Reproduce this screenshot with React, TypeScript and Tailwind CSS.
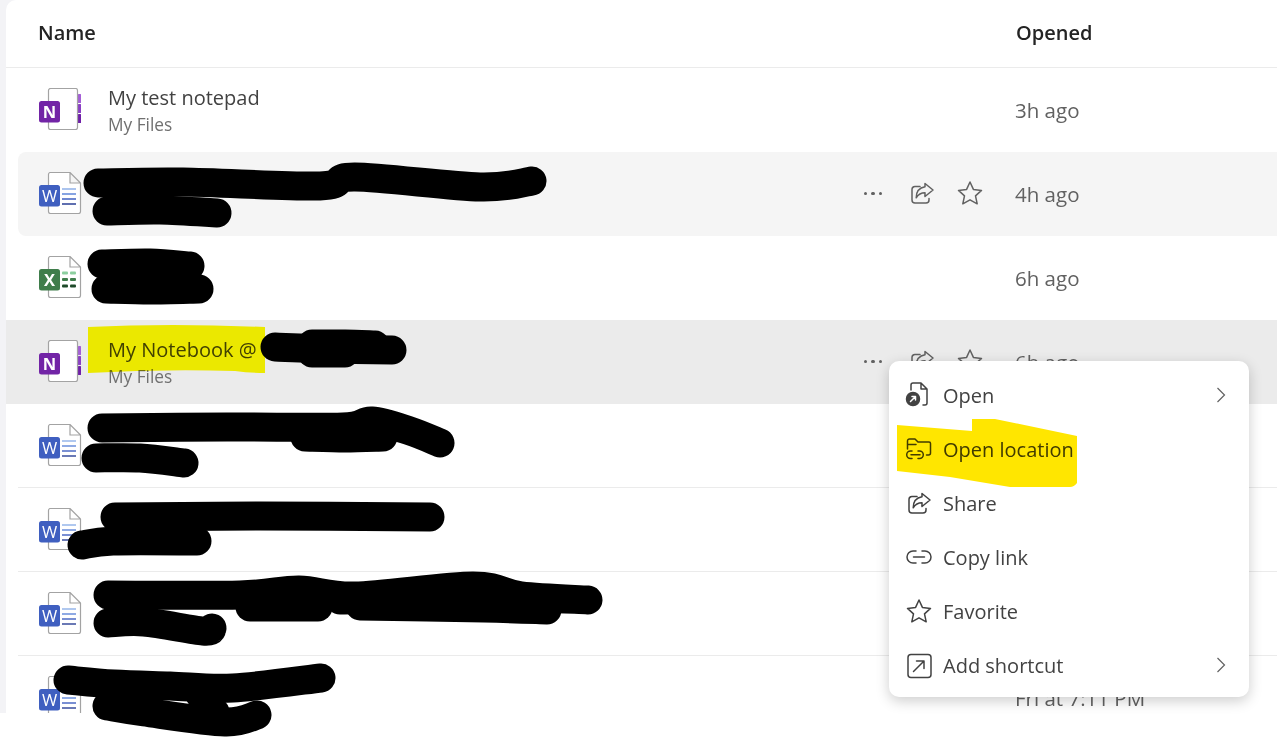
import type { ReactNode } from "react";

type FileKind = "onenote" | "word" | "excel";

type Row = {
  kind: FileKind;
  name?: string;
  place?: string;
  opened?: string;
  actions?: boolean;
  tone?: "hover" | "selected";
  divider?: boolean;
};

const rows: Row[] = [
  { kind: "onenote", name: "My test notepad", place: "My Files", opened: "3h ago" },
  { kind: "word", opened: "4h ago", actions: true, tone: "hover" },
  { kind: "excel", opened: "6h ago" },
  { kind: "onenote", name: "My Notebook @", place: "My Files", opened: "6h ago", actions: true, tone: "selected" },
  { kind: "word", divider: true },
  { kind: "word", divider: true },
  { kind: "word", divider: true },
  { kind: "word", opened: "Fri at 7:11 PM" },
];

function FileIcon({ kind }: { kind: FileKind }) {
  const badge = kind === "onenote" ? "#7224a6" : kind === "word" ? "#3f5fc0" : "#3f7d4b";
  const letter = kind === "onenote" ? "N" : kind === "word" ? "W" : "X";
  return (
    <svg width="44" height="42" viewBox="0 0 44 42" className="-mt-[2px] shrink-0">
      {kind === "onenote" ? (
        <>
          <rect x="39" y="6" width="3" height="9" rx="0.5" fill="#a45fd6" />
          <rect x="39" y="16" width="3" height="9" rx="0.5" fill="#8a3fc4" />
          <rect x="39" y="26" width="3" height="9" rx="0.5" fill="#6f1fa8" />
          <rect x="9.5" y="0.5" width="29" height="41" rx="2" fill="#fff" stroke="#a3a3a3" strokeWidth="1.2" />
        </>
      ) : (
        <path d="M11.5 0.5H31L41.5 11V39.5a2 2 0 0 1-2 2H11.5a2 2 0 0 1-2-2V2.5a2 2 0 0 1 2-2ZM31 0.5V11H41.5" fill="#fff" stroke="#a3a3a3" strokeWidth="1.2" />
      )}
      {kind === "word" && (
        <g fill="none" strokeWidth="1.4">
          <path d="M23 17H37" stroke="#8fb0e8" />
          <path d="M23 22H37" stroke="#5f86d8" />
          <path d="M23 27H37" stroke="#3f5fc0" />
          <path d="M23 32H37" stroke="#2a3f96" />
        </g>
      )}
      {kind === "excel" && (
        <g>
          <rect x="23" y="15.5" width="6" height="3" rx="1" fill="#8ccf9f" />
          <rect x="31" y="15.5" width="6" height="3" rx="1" fill="#8ccf9f" />
          <rect x="23" y="22" width="6" height="3" rx="1" fill="#3f7d4b" />
          <rect x="31" y="22" width="6" height="3" rx="1" fill="#3f7d4b" />
          <rect x="23" y="28.5" width="6" height="3" rx="1" fill="#1f4a2a" />
          <rect x="31" y="28.5" width="6" height="3" rx="1" fill="#1f4a2a" />
        </g>
      )}
      <rect x="0" y="13" width="21" height="21.5" rx="2.5" fill={badge} />
      <text x="10.5" y="30" textAnchor="middle" fontSize="16.5" fontWeight={kind === "word" ? 400 : 700} fill="#fff" fontFamily="Open Sans, sans-serif">
        {letter}
      </text>
    </svg>
  );
}

function ShareIcon({ size = 28, color = "#616161" }: { size?: number; color?: string }) {
  return (
    <svg width={size} height={size} viewBox="0 0 28 28" fill="none" stroke={color} strokeWidth="1.5" strokeLinejoin="round" strokeLinecap="round">
      <path d="M12 6.5H7a3 3 0 0 0-3 3V20a3 3 0 0 0 3 3h11a3 3 0 0 0 3-3v-1.5" />
      <path d="M17 3.5 25 10l-8 6.5v-3.7c-3.8 0-6.6 1.5-8.8 5 0-6.2 3-10 8.8-11Z" />
    </svg>
  );
}

function StarIcon({ color = "#616161" }: { color?: string }) {
  return (
    <svg width="28" height="28" viewBox="0 0 28 28" fill="none" stroke={color} strokeWidth="1.5" strokeLinejoin="round">
      <path d="M14 2 17.4 9.4 25.5 10.4 19.5 15.9 21.2 23.8 14 19.8 6.8 23.8 8.5 15.9 2.5 10.4 10.6 9.4Z" />
    </svg>
  );
}

function RowActions() {
  return (
    <div className="flex items-center pr-[21px]">
      <div className="flex w-[50px] justify-center gap-[4px]">
        <span className="size-[3.5px] rounded-full bg-[#616161]" />
        <span className="size-[3.5px] rounded-full bg-[#616161]" />
        <span className="size-[3.5px] rounded-full bg-[#616161]" />
      </div>
      <div className="flex w-[48px] justify-center">
        <ShareIcon />
      </div>
      <div className="flex w-[48px] justify-center">
        <StarIcon />
      </div>
    </div>
  );
}

function FileRow({ row }: { row: Row }) {
  const toneClass =
    row.tone === "hover"
      ? "ml-3 rounded-l-lg bg-[#f5f5f5] pl-[21px]"
      : row.tone === "selected"
        ? "bg-[#ebebeb] pl-[33px]"
        : "ml-3 pl-[21px]";
  return (
    <div className={`flex h-[84px] shrink-0 items-center border-b ${row.divider ? "border-[#ebebeb]" : "border-transparent"} ${toneClass}`}>
      <FileIcon kind={row.kind} />
      <div className="ml-[25px] flex min-w-0 flex-1 flex-col pt-[2px]">
        {row.name && <span className="text-[20px] leading-[27px] text-[#424242]">{row.name}</span>}
        {row.place && <span className="mt-px text-[17.3px] leading-[25px] text-[#707070]">{row.place}</span>}
      </div>
      {row.actions && <RowActions />}
      <div className="w-[262px] shrink-0 pt-[2px] text-[20.5px] text-[#616161]">{row.opened}</div>
    </div>
  );
}

function MenuItem({ icon, label, more }: { icon: ReactNode; label: string; more?: boolean }) {
  return (
    <div className="flex h-[54px] items-center px-4">
      <div className="flex size-7 shrink-0 items-center justify-center">{icon}</div>
      <span className="ml-[10px] flex-1 text-[20px] text-[#424242]">{label}</span>
      {more && (
        <svg width="10" height="16" viewBox="0 0 10 16" fill="none" stroke="#616161" strokeWidth="1.2" className="mr-[7px] mb-[3px]">
          <path d="M1.5 1 8.5 8 1.5 15" />
        </svg>
      )}
    </div>
  );
}

const ink = { fill: "none", stroke: "#424242", strokeWidth: 1.5, strokeLinecap: "round", strokeLinejoin: "round" } as const;

function ContextMenu() {
  return (
    <div className="absolute top-[361px] left-[889px] z-20 w-[360px] rounded-[10px] bg-white pt-2 pb-1 shadow-[0_4px_14px_rgba(0,0,0,0.2)]">
      <MenuItem
        more
        label="Open"
        icon={
          <svg width="28" height="28" viewBox="0 0 28 28" {...ink}>
            <path d="M6 8V3a2 2 0 0 1 2-2h8l6 6v14a2 2 0 0 1-2 2h-2M16 1v6h6" />
            <circle cx="8" cy="17" r="6.5" fill="#424242" />
            <path d="M5.5 19.5 10.5 14.5M7 14.5h3.5V18" stroke="#fff" />
          </svg>
        }
      />
      <MenuItem
        label="Open location"
        icon={
          <svg width="28" height="28" viewBox="0 0 28 28" {...ink}>
            <path d="M2.5 13V5a2 2 0 0 1 2-2h5.5l3 3h11a1.5 1.5 0 0 1 1.5 1.5V17a2 2 0 0 1-2 2h-2M2.5 8.5H11" />
            <path d="M7 15H5.5a3.8 3.8 0 0 0 0 7.6H7M13 15h1.5a3.8 3.8 0 0 1 0 7.6H13M6 18.8h9" />
          </svg>
        }
      />
      <MenuItem label="Share" icon={<ShareIcon color="#424242" />} />
      <MenuItem
        label="Copy link"
        icon={
          <svg width="28" height="28" viewBox="0 0 28 28" {...ink}>
            <path d="M11 7H8a6 6 0 0 0 0 12h3M17 7h3a6 6 0 0 1 0 12h-3M8.5 13h11" />
          </svg>
        }
      />
      <MenuItem label="Favorite" icon={<StarIcon color="#424242" />} />
      <MenuItem
        more
        label="Add shortcut"
        icon={
          <svg width="28" height="28" viewBox="0 0 28 28" {...ink}>
            <rect x="3" y="2.5" width="23" height="23" rx="3" />
            <path d="M8.5 19.5 19 9M11.5 9H19v7.5" />
          </svg>
        }
      />
    </div>
  );
}

// catmull-rom through the points, so the marker strokes stay soft
function smooth(points: number[][]) {
  let d = `M${points[0][0]} ${points[0][1]}`;
  for (let i = 0; i < points.length - 1; i++) {
    const p0 = points[Math.max(i - 1, 0)];
    const p1 = points[i];
    const p2 = points[i + 1];
    const p3 = points[Math.min(i + 2, points.length - 1)];
    const c1 = [p1[0] + (p2[0] - p0[0]) / 6, p1[1] + (p2[1] - p0[1]) / 6];
    const c2 = [p2[0] - (p3[0] - p1[0]) / 6, p2[1] - (p3[1] - p1[1]) / 6];
    d += ` C${c1[0]} ${c1[1]} ${c2[0]} ${c2[1]} ${p2[0]} ${p2[1]}`;
  }
  return d;
}

const scribbles: number[][][] = [
  [[98, 183], [183, 182], [320, 186], [355, 177], [480, 187], [532, 181]],
  [[107, 211], [160, 210], [217, 213]],
  [[102, 264], [150, 263], [190, 266]],
  [[106, 289], [150, 290], [199, 289]],
  [[275, 347], [330, 349], [392, 350]],
  [[312, 344], [345, 344], [375, 345]],
  [[312, 353], [345, 353]],
  [[102, 428], [227, 427], [343, 427], [372, 421], [410, 431], [440, 443]],
  [[305, 437], [345, 438], [383, 437]],
  [[96, 458], [140, 458], [184, 463]],
  [[115, 517], [260, 516], [430, 517]],
  [[82, 545], [113, 541], [197, 541]],
  [[108, 595], [240, 595], [299, 590], [355, 596], [473, 586], [521, 596], [588, 600]],
  [[250, 607], [318, 607]],
  [[340, 600], [470, 598], [535, 602]],
  [[360, 606], [484, 608], [547, 610]],
  [[108, 623], [144, 622], [203, 631], [212, 628]],
  [[68, 680], [114, 684], [170, 686], [233, 688], [321, 678]],
  [[107, 706], [144, 712], [225, 722], [257, 715]],
  [[200, 695], [215, 712]],
];

// the marker pen scribbles sitting on top of the screenshot
function Scribbles() {
  return (
    <svg width="1277" height="737" viewBox="0 0 1277 737" className="pointer-events-none absolute top-0 left-0 z-10" fill="none" stroke="#000" strokeWidth="29" strokeLinecap="round" strokeLinejoin="round">
      {scribbles.map((points, i) => (
        <path key={i} d={smooth(points)} />
      ))}
    </svg>
  );
}

function NameHighlight() {
  return (
    <svg width="1277" height="737" viewBox="0 0 1277 737" className="pointer-events-none absolute top-0 left-0 z-[5] mix-blend-multiply">
      <path d="M88 327Q170 323 265 327V373Q250 373 235 371 160 369 88 373Z" fill="#fffc00" />
    </svg>
  );
}

function MenuHighlight() {
  return (
    <svg width="1277" height="737" viewBox="0 0 1277 737" className="pointer-events-none absolute top-0 left-0 z-30 mix-blend-multiply">
      <path d="M897 425 972 431V419H995L1077 436V483Q1074 487 1070 487H1010L950 477 897 471Z" fill="#ffe600" />
    </svg>
  );
}

export default function App() {
  return (
    <div className="relative h-[737px] w-[1277px] overflow-hidden bg-white font-['Open_Sans',sans-serif]">
      <div className="h-[713px] bg-[#f3f3f6] pl-[6px]">
        <div className="flex h-full flex-col overflow-hidden rounded-tl-[10px] bg-white">
          <div className="flex h-[68px] shrink-0 items-center border-b border-[#ebebeb] pb-[2px] pl-[32px] text-[20px] font-semibold text-[#242424]">
            <div className="flex-1">Name</div>
            <div className="w-[261px]">Opened</div>
          </div>
          {rows.map((row, i) => (
            <FileRow key={i} row={row} />
          ))}
        </div>
      </div>
      <NameHighlight />
      <Scribbles />
      <ContextMenu />
      <MenuHighlight />
    </div>
  );
}
